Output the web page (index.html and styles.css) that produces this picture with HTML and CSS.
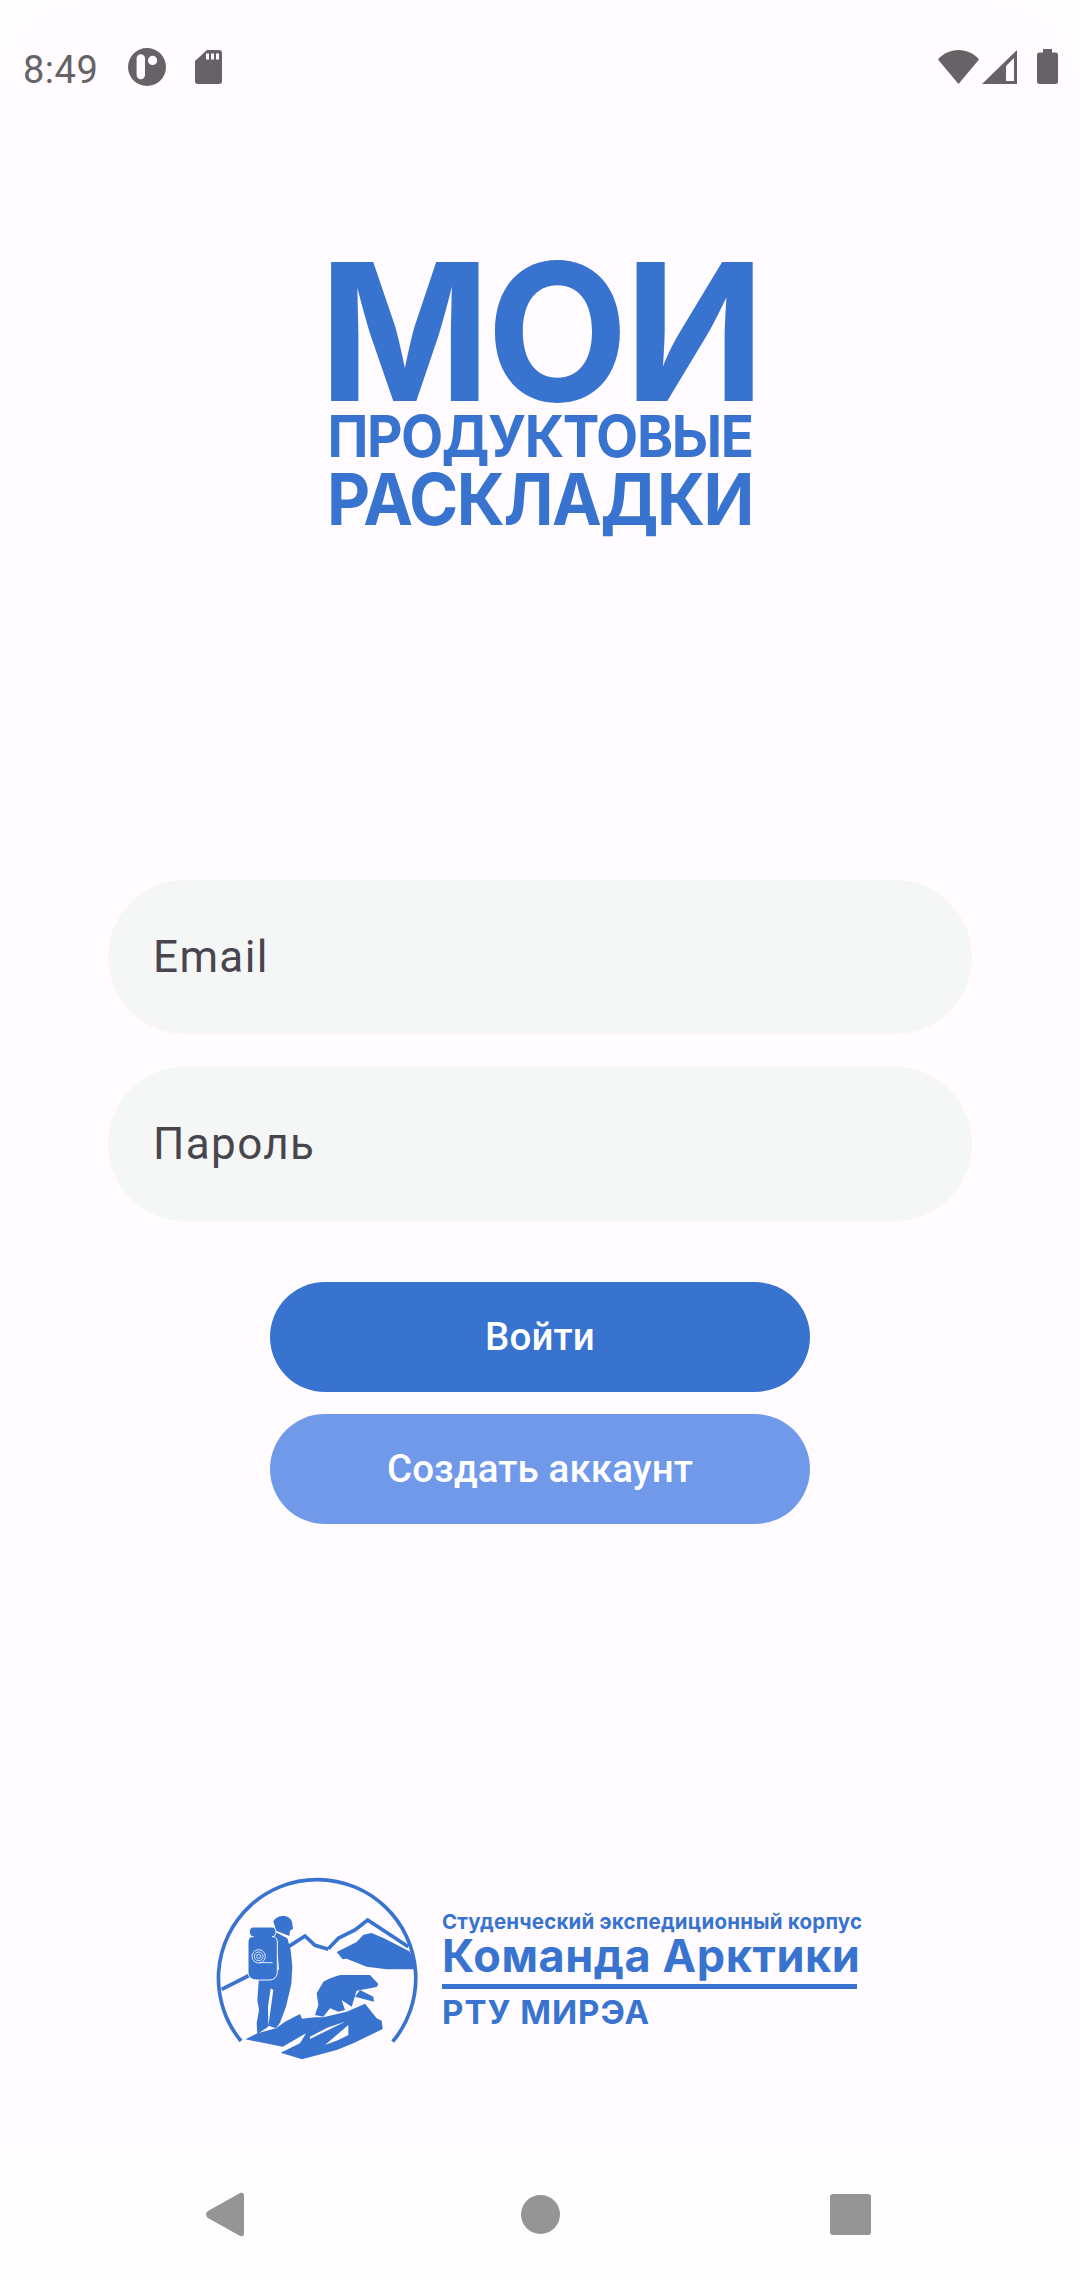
FILE: index.html
```html
<!DOCTYPE html>
<html lang="ru">
<head>
<meta charset="utf-8">
<title>Мои продуктовые раскладки</title>
<link rel="stylesheet" href="styles.css">
</head>
<body>
<div class="screen">
  <div class="app">
    <header class="status">
      <div class="status-left">
        <span class="time">8:49</span>
        <svg class="ic-app" viewBox="0 0 38 38"><path class="ico" fill-rule="evenodd" d="M19 0a19 19 0 1 1 0 38a19 19 0 1 1 0-38zM8.600 10.500v16.500a4.200 4.200 0 0 0 8.400 0V10.500a4.200 4.200 0 0 0-8.400 0zM24.600 7.800a4.600 4.600 0 1 0 0 9.200a4.600 4.600 0 1 0 0-9.200z"/></svg>
        <svg class="ic-sd" viewBox="0 0 27 34"><path class="ico" fill-rule="evenodd" d="M12 0H24a3 3 0 0 1 3 3V31a3 3 0 0 1-3 3H3a3 3 0 0 1-3-3V11zM11 3.500v6h3v-6zM16 3.500v6h3v-6zM21 3.500v6h3v-6z"/></svg>
      </div>
      <div class="status-right">
        <svg class="ic-wifi" viewBox="0 0 41 34"><path class="ico" d="M0 9.500C5 3.500 12.500 0 20.500 0S36 3.500 41 9.500L20.500 34z"/></svg>
        <svg class="ic-signal" viewBox="0 0 35 34"><path class="ico" fill-rule="evenodd" d="M35 0V34H0zM24 16v15h8V8z"/></svg>
        <svg class="ic-batt" viewBox="0 0 21 35"><path class="ico" d="M6 0H15V3.500H18.500a2.500 2.500 0 0 1 2.500 2.500V32.500a2.500 2.500 0 0 1-2.500 2.500H2.500a2.500 2.500 0 0 1-2.500-2.500V6a2.500 2.500 0 0 1 2.500-2.500H6z"/></svg>
      </div>
    </header>

    <div class="logo">
      <div class="logo-big">МОИ</div>
      <div class="logo-mid">ПРОДУКТОВЫЕ</div>
      <div class="logo-low">РАСКЛАДКИ</div>
    </div>

    <form class="form">
      <div class="field">Email</div>
      <div class="field">Пароль</div>
      <div class="btn btn-primary">Войти</div>
      <div class="btn btn-secondary">Создать аккаунт</div>
    </form>

    <footer class="team">
      <svg class="emblem" viewBox="0 0 720 660">
        <g class="lines">
          <path d="M123 543A296 296 0 1 1 578 545"/>
          <path d="M65 388L150 345"/>
          <path d="M262 262L315 228L345 256L385 268"/>
          <path d="M385 266L416 234L465 210L503 180L625 260"/>
        </g>
        <g class="solid">
          <path d="M410 276L470 246L490 224L515 219L552 235L628 274L640 292L644 328L560 328L500 320L440 296L428 298z"/>
          <path d="M248 167C265 168 277 178 277 192L279 206L270 212L268 228L228 212L220 184C226 174 236 168 248 168z"/>
          <path d="M225 215L262 235L272 270L277 320L274 372L258 440L240 488L228 505L205 497L220 390L212 385L204 440L205 500L172 522L170 490L177 450L172 420L177 350z"/>
          <path class="pack" d="M160 201H216C232 201 232 230 216 230H222C228 232 232 238 232 246V336C232 350 222 360 208 360H170C154 360 144 350 144 336V246C144 238 148 232 154 230H160C144 230 144 201 160 201z"/>
          <path d="M535 372L510 345L420 345C400 352 385 356 370 365L350 400L355 435L345 465L370 470L390 445L415 455L435 450L425 420L455 440L470 392L530 381z"/>
          <path d="M480 390L520 410L522 425L465 410z"/>
          <path fill-rule="evenodd" d="M136 538L172 520L228 505L255 485L300 462L306 476L345 472L370 472L440 455L495 431L530 475L545 482L548 507L460 550L410 570L306 598L242 578L300 550L318 520L248 560zM330 537L435 485L385 502L330 530zM375 555L445 495V525L415 540z"/>
        </g>
        <g class="rings">
          <circle cx="176" cy="289" r="20"/>
          <circle cx="176" cy="289" r="13"/>
          <circle cx="176" cy="289" r="6"/>
          <path d="M178 308H218M232 285L236 330"/>
        </g>
      </svg>
      <div class="team-text">
        <div class="team-sub">Студенческий экспедиционный корпус</div>
        <div class="team-name">Команда Арктики</div>
        <div class="team-org">РТУ МИРЭА</div>
      </div>
    </footer>
  </div>

  <nav class="nav">
    <svg class="nav-back" viewBox="0 0 40 46"><path d="M35 1L2 19.500C-0.500 21.500-0.500 24.500 2 26.500L35 45C37.500 46 39 45 39 42V4C39 1 37.500 0 35 1z"/></svg>
    <span class="nav-home"></span>
    <span class="nav-recent"></span>
  </nav>
</div>
</body>
</html>
```
FILE: styles.css
```css
* { box-sizing: border-box; }
html, body { margin: 0; padding: 0; }
body { width: 1080px; height: 2280px; background: #fffeff; font-family: Roboto, "Noto Sans", sans-serif; overflow: hidden; }
.screen { display: flex; flex-direction: column; height: 2280px; }
.app { height: 2148px; background: #fffbfe; border-radius: 80px 80px 0 0; display: flex; flex-direction: column; align-items: center; }

.status { width: 100%; height: 96px; flex: none; padding: 48px 22px 0 23px; display: flex; justify-content: space-between; align-items: flex-start; }
.status-left, .status-right { display: flex; align-items: flex-start; }
.time { font-size: 38px; line-height: 38px; color: #666366; letter-spacing: 0.5px; margin-top: 3px; }
.ico { fill: #666366; }
.ic-app { width: 38px; height: 38px; margin-left: 30px; }
.ic-sd { width: 27px; height: 34px; margin: 2px 0 0 29px; }
.ic-wifi { width: 41px; height: 34px; margin-top: 2px; }
.ic-signal { width: 35px; height: 34px; margin: 2px 0 0 3px; }
.ic-batt { width: 21px; height: 35px; margin: 1px 0 0 20px; }

.logo { width: 500px; margin-top: 161px; flex: none; font-family: Inter, "Liberation Sans", sans-serif; font-weight: 700; color: #3874cf; text-align: center; white-space: nowrap; }
.logo-big { font-size: 191px; line-height: 150px; letter-spacing: -4px; transform: scaleX(.964); }
.logo-mid { font-size: 58px; line-height: 59px; letter-spacing: -1.500px; transform: scaleX(.945); }
.logo-low { font-size: 71.500px; line-height: 67px; letter-spacing: -1.500px; transform: scaleX(.933); }

.form { margin-top: 347px; width: 864px; flex: none; display: flex; flex-direction: column; align-items: center; }
.field { width: 100%; height: 154px; border-radius: 77px; background: #f5f7f6; color: #49454f; font-size: 44px; letter-spacing: 1.375px; line-height: 154px; padding-left: 45px; margin-bottom: 33px; }
.btn { width: 540px; height: 110px; border-radius: 55px; color: #fff; font-size: 38.500px; font-weight: 500; line-height: 110px; text-align: center; letter-spacing: 0.1px; }
.btn-primary { background: #3873cf; margin-top: 28px; }
.btn-secondary { background: #7099ea; margin-top: 22px; }

.team { margin-top: 336px; width: 680px; flex: none; display: flex; align-items: flex-start; }
.emblem { width: 240px; height: 220px; flex: none; }
.lines { fill: none; stroke: #3874cf; stroke-width: 11; }
.solid { fill: #3874cf; }
.pack { stroke: #fffbfe; stroke-width: 3; }
.rings { fill: none; stroke: #fffbfe; stroke-width: 2.500; }
.team-text { margin: 50px 0 0 2px; font-family: Inter, "Liberation Sans", sans-serif; font-weight: 700; color: #3874cf; white-space: nowrap; }
.team-sub { font-size: 20.500px; line-height: 24px; letter-spacing: 0.200px; }
.team-name { width: 415px; font-size: 45px; line-height: 44px; letter-spacing: 0.600px; padding-bottom: 6px; border-bottom: 5px solid #3874cf; }
.team-org { font-size: 33px; line-height: 46px; letter-spacing: 1px; }

.nav { height: 132px; flex: none; display: flex; justify-content: space-between; align-items: center; padding: 0 209px 0 206px; }
.nav-back { width: 39px; height: 45px; fill: #959595; }
.nav-home { width: 39px; height: 39px; border-radius: 50%; background: #959595; margin-left: 6px; }
.nav-recent { width: 41px; height: 41px; border-radius: 3px; background: #959595; }
```
